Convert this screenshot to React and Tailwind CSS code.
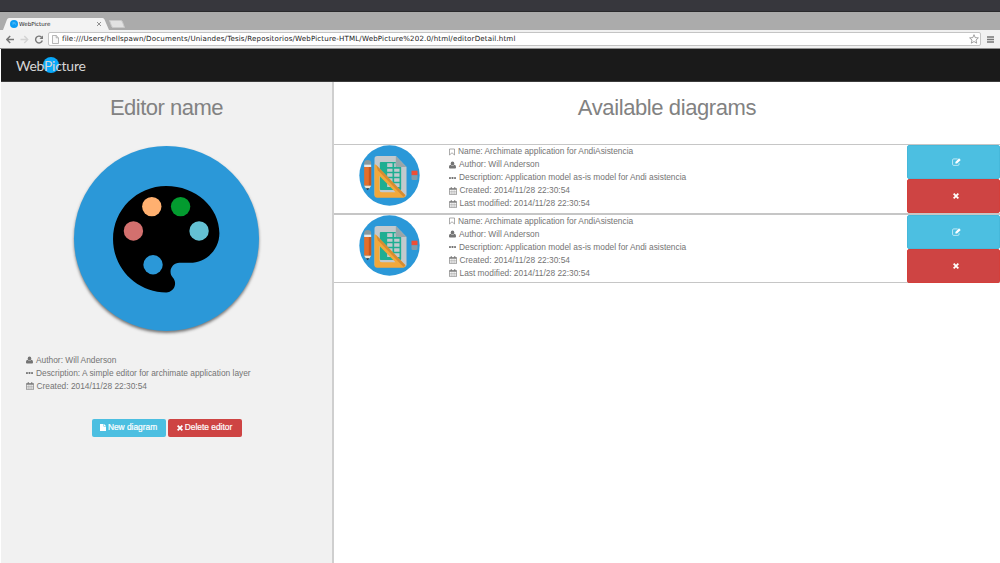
import React from "react";

const UserIcon = () => (
  <svg viewBox="0 0 14 14" className="mr-px h-[8px] w-[7px] shrink-0 fill-current">
    <ellipse cx="7" cy="4" rx="3.600" ry="4" />
    <path d="M0 12C0 8.500 1 7 3.300 6.500 5.500 9 8.500 9 10.700 6.500 13 7 14 8.500 14 12 14 13.400 13 14 11.500 14H2.500C1 14 0 13.400 0 12Z" />
  </svg>
);
const DotsIcon = () => (
  <svg viewBox="0 0 14 4" className="mr-px h-[2px] w-[7px] shrink-0 fill-current">
    <rect x="0" width="3.800" height="4" rx="0.800" />
    <rect x="5.100" width="3.800" height="4" rx="0.800" />
    <rect x="10.200" width="3.800" height="4" rx="0.800" />
  </svg>
);
const CalendarIcon = () => (
  <svg viewBox="0 0 16 16" className="mr-[0.500px] h-[8px] w-[8px] shrink-0" fill="none" stroke="currentColor">
    <path d="M1 3H15V15.300H1Z" strokeWidth="1.200" />
    <path d="M1 4.200H15" strokeWidth="2.400" />
    <path d="M4.500 0V4M11.500 0V4" strokeWidth="1.800" />
    <path d="M1 9H15M1 12H15M4.500 6V15M8 6V15M11.500 6V15" strokeWidth="0.600" />
  </svg>
);
const BookmarkIcon = () => (
  <svg viewBox="0 0 12 14" className="mr-px h-[8px] w-[6px] shrink-0" fill="none" stroke="currentColor" strokeWidth="1.200">
    <path d="M1 1H11V13L6 8.500 1 13Z" />
  </svg>
);
const FileIcon = () => (
  <svg viewBox="0 0 12 14" className="h-[7px] w-[6px] shrink-0 fill-current">
    <path d="M0 0H7V5H12V14H0ZM8 0 12 4H8Z" />
  </svg>
);
const CrossIcon = () => (
  <svg viewBox="0 0 12 12" className="h-[6px] w-[6px] shrink-0" stroke="currentColor" strokeWidth="3.600">
    <path d="M1.300 1.300 10.700 10.700M10.700 1.300 1.300 10.700" />
  </svg>
);
const EditIcon = () => (
  <svg viewBox="0 0 16 14" className="h-[8px] w-[9px] shrink-0" fill="none" stroke="currentColor">
    <path d="M10 1.500H3Q1 1.500 1 3.500V11Q1 13 3 13H10.500Q12.500 13 12.500 11V9" strokeWidth="1.100" />
    <path d="M6 9.500V7L12.500 0.500 15.500 3.500 9 9.500Z" fill="currentColor" stroke="none" />
  </svg>
);

const Palette = () => (
  <svg viewBox="0 0 185 185" className="h-[185px] w-[185px] rounded-full bg-[#2b98d8] shadow-[0_2px_3px_rgba(0,0,0,0.5)]">
    <g transform="translate(21.300 22.300) scale(5.910)">
      <path d="M12 3c-4.970 0-9 4.030-9 9s4.030 9 9 9c.83 0 1.500-.67 1.500-1.500 0-.39-.15-.74-.39-1.010-.23-.26-.38-.61-.38-.99 0-.83.67-1.500 1.500-1.500H16c2.760 0 5-2.240 5-5 0-4.420-4.030-8-9-8z" />
      <circle cx="6.450" cy="10.600" r="1.640" fill="#d3706e" />
      <circle cx="9.560" cy="6.480" r="1.640" fill="#ffb070" />
      <circle cx="14.430" cy="6.480" r="1.640" fill="#039b2f" />
      <circle cx="17.560" cy="10.600" r="1.640" fill="#64c1d3" />
      <circle cx="9.770" cy="16.320" r="1.640" fill="#2b98d8" />
    </g>
  </svg>
);

const DiagramIcon = () => (
  <svg viewBox="87 180 182 183" className="h-[61px] w-[61px]">
    <circle cx="178" cy="271.500" r="90.500" fill="#2b98d8" />
    <path d="M141 213H197L229 246V328Q229 336 221 336H141Q133 336 133 328V221Q133 213 141 213Z" fill="#c3c9cd" />
    <rect x="149" y="231" width="64" height="84" rx="3" fill="#1fae92" />
    <g fill="#c3c9cd">
      <path d="M171 235H187V246H171ZM171 251H187V260H171ZM171 265H187V275H171ZM171 280H187V290H171ZM171 295H187V306H171Z" />
      <path d="M192 251H208V260H192ZM192 265H208V275H192ZM192 280H208V290H192ZM192 295H208V306H192ZM192 235H197V246H192Z" />
      <path d="M197 230H214V246H203Q197 246 197 240Z" />
    </g>
    <path d="M197 213 229 246H203Q197 246 197 240Z" fill="#98a6a9" />
    <path d="M133 240Q133 235 138 240L226 331Q226 338 220 338H141Q133 338 133 330ZM148 273V315Q148 322 155 322H196Z" fill="#f2a83b" fillRule="evenodd" />
    <path d="M138 240 226 331 220 336 143 256Z" fill="#cf8530" opacity="0.800" />
    <path d="M102 241V235Q102 225 112.500 225T123 235V241Z" fill="#8b989b" />
    <path d="M102 239H123V246H102Z" fill="#e6e9ea" />
    <path d="M102 246H123V302H102Z" fill="#e56f2b" />
    <path d="M116 246H123V302H116Z" fill="#c9571e" />
    <path d="M102 302H123L117 311H108Z" fill="#f0e2cf" />
    <path d="M107 310H118L112.500 316Z" fill="#263746" />
    <path d="M244 257H262V271H244Z" fill="#ef4e36" />
    <path d="M244 271H262V281Q262 285 258 285H248Q244 285 244 281Z" fill="#7f9cab" />
  </svg>
);

const Line = ({ icon, children }) => (
  <div className="flex h-[13.050px] items-center gap-[2px] whitespace-nowrap">
    {icon}
    <span>{children}</span>
  </div>
);

const DiagramRow = () => (
  <div className="flex h-[69.500px] items-start border-y border-[#c6c6c6]">
    <div className="w-[115px] pl-[25px]">
      <DiagramIcon />
    </div>
    <div className="flex-1">
      <Line icon={<BookmarkIcon />}>Name: Archimate application for AndiAsistencia</Line>
      <Line icon={<UserIcon />}>Author: Will Anderson</Line>
      <Line icon={<DotsIcon />}>Description: Application model as-is model for Andi asistencia</Line>
      <Line icon={<CalendarIcon />}>Created: 2014/11/28 22:30:54</Line>
      <Line icon={<CalendarIcon />}>Last modified: 2014/11/28 22:30:54</Line>
    </div>
    <div className="flex w-[93px] flex-col text-white">
      <button className="flex h-[34px] items-center justify-center rounded-[2px] border border-[#46b8da] bg-[#4cbfe1] pl-[5px]">
        <EditIcon />
      </button>
      <button className="flex h-[34px] items-center justify-center rounded-[2px] border border-[#d43f3a] bg-[#ce4443] pl-[5px]">
        <CrossIcon />
      </button>
    </div>
  </div>
);

const Browser = () => (
  <div className="h-[49px]">
    <div className="h-[12px] border-b border-[#29292c] bg-[#37373d]" />
    <div className="flex h-[18px] items-end bg-[#ababab] pl-[3px]">
      <div className="relative flex h-[12px] w-[106px] items-center pl-[7px]">
        <svg viewBox="0 0 106 12" className="absolute inset-0 h-[12px] w-[106px]">
          <path d="M0 12 4 1.500Q4.500 0 6 0H99.500Q101 0 101.500 1.500L106 12Z" fill="#f3f3f3" />
        </svg>
        <span className="relative flex h-[8px] w-[8px] items-center justify-center rounded-full bg-[#0c9cf3] text-[4px] text-[#8dd0fb]">Pi</span>
        <span className="relative ml-[1px] w-[78px] font-['DejaVu_Sans'] text-[5.600px] text-[#222]">WebPicture</span>
        <svg viewBox="0 0 4 4" className="relative h-[4px] w-[4px]" stroke="#777" strokeWidth="0.800">
          <path d="M0 0 4 4M4 0 0 4" />
        </svg>
      </div>
      <svg viewBox="0 0 16 8" className="mb-[2px] h-[8px] w-[16px]">
        <path d="M0.500 0.500H12Q13 0.500 13.500 2L15.500 7.500H4Q3 7.500 2.500 6Z" fill="#e2e2e2" stroke="#c9c9c9" />
      </svg>
    </div>
    <div className="flex h-[19px] items-center border-b border-[#8f8f8f] bg-[#f1f1f1] pl-[6px]">
      <svg viewBox="0 0 38 9" className="h-[9px] w-[38px]" fill="none" strokeWidth="1.400">
        <path d="M8 4.500H1M4.200 1 0.800 4.500 4.200 8" stroke="#777" />
        <path d="M14.500 4.500H21.500M18.300 1 21.700 4.500 18.300 8" stroke="#d3d3d3" />
        <path d="M35.500 2.200A3.400 3.400 0 1 0 36.300 5.500" stroke="#777" />
        <path d="M37 0.500V4H33.500Z" fill="#777" />
      </svg>
      <div className="ml-[4px] flex h-[14px] w-[933px] items-center rounded-[2px] border border-[#c4c4c4] bg-white pl-[3px]">
        <svg viewBox="0 0 7 9" className="h-[9px] w-[7px]" fill="#f8f8f8" stroke="#999" strokeWidth="0.700">
          <path d="M0.500 0.500H4.200L6.500 2.800V8.500H0.500ZM4.200 0.500V2.800H6.500" />
        </svg>
        <span className="relative top-[0.500px] ml-[3px] flex-1 whitespace-nowrap font-['DejaVu_Sans'] text-[7.100px] tracking-[0.144px] text-[#222]">
          file:///Users/hellspawn/Documents/Uniandes/Tesis/Repositorios/WebPicture-HTML/WebPicture%202.0/html/editorDetail.html
        </span>
        <svg viewBox="0 0 10 10" className="mr-[1px] h-[10px] w-[10px]" fill="none" stroke="#8c8c8c" strokeWidth="0.800">
          <path d="M5 0.700 6.200 3.600 9.400 3.900 7 6 7.700 9.200 5 7.500 2.300 9.200 3 6 0.600 3.900 3.800 3.600Z" />
        </svg>
      </div>
      <svg viewBox="0 0 7 7" className="ml-[6px] h-[7px] w-[7px]" stroke="#777" strokeWidth="1.400">
        <path d="M0 1H7M0 3.500H7M0 6H7" />
      </svg>
    </div>
  </div>
);

export default function App() {
  return (
    <div className="flex h-[563px] w-[1000px] flex-col overflow-hidden bg-white font-['Liberation_Sans',sans-serif] text-[8.370px] text-[#747474]">
      <Browser />
      <header className="ml-px flex h-[33px] items-center border-b border-[#3c3c3c] bg-[#1a1a1a] pl-[15px]">
        <div className="relative font-['Lato'] text-[14px] font-normal tracking-[-0.260px] text-[#d6d6d6]">
          <span className="absolute top-[2px] left-[27px] h-[16px] w-[16px] rounded-full bg-[#08a8fa]" />
          <span className="relative">WebPicture</span>
        </div>
      </header>
      <div className="flex flex-1">
        <aside className="ml-px flex w-[333px] flex-col border-r-2 border-[#cfcfcf] bg-[#f1f1f1]">
          <h1 className="mt-[13px] h-[26px] text-center text-[22px] leading-[26px] tracking-[-0.500px] text-[#828282]">Editor name</h1>
          <div className="mt-[25px] flex justify-center">
            <Palette />
          </div>
          <div className="mt-[22.500px] pl-[25px]">
            <Line icon={<UserIcon />}>Author: Will Anderson</Line>
            <Line icon={<DotsIcon />}>Description: A simple editor for archimate application layer</Line>
            <Line icon={<CalendarIcon />}>Created: 2014/11/28 22:30:54</Line>
          </div>
          <div className="mt-[26px] flex justify-center gap-[2px] text-white">
            <button className="flex h-[18px] w-[74px] items-center justify-center gap-[2px] rounded-[2px] bg-[#4cbfe1] whitespace-nowrap [-webkit-text-stroke:0.200px_white]">
              <FileIcon />
              New diagram
            </button>
            <button className="flex h-[18px] w-[74px] items-center justify-center gap-[2px] rounded-[2px] bg-[#ce4443] whitespace-nowrap [-webkit-text-stroke:0.200px_white]">
              <CrossIcon />
              Delete editor
            </button>
          </div>
        </aside>
        <main className="flex-1">
          <h1 className="mt-[13px] mb-[23px] h-[26px] text-center text-[22px] leading-[26px] tracking-[-0.400px] text-[#828282]">Available diagrams</h1>
          <DiagramRow />
          <DiagramRow />
        </main>
      </div>
    </div>
  );
}
